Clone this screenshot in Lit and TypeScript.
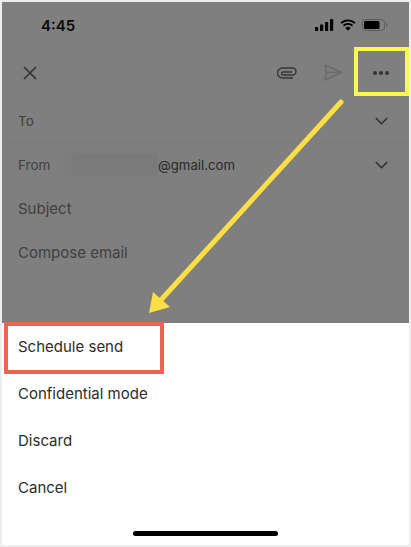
import { LitElement, css, html, svg } from 'lit'
import { customElement } from 'lit/decorators.js'

const chevron = svg`<svg class="chev" width="13" height="8" viewBox="0 0 13 8"><path d="M.8 1l5.700 5.700L12.200 1" fill="none" stroke="#2f2f2f" stroke-width="1.600"/></svg>`

@customElement('app-root')
export class AppRoot extends LitElement {
  render() {
    return html`
      <div class="frame">
        <div class="compose">
          <div class="status">
            <span class="time">4:45</span>
            <div class="status-icons">
              <svg width="19" height="12" viewBox="0 0 19 12">
                <rect x="0" y="8" width="3.200" height="4" rx=".8" />
                <rect x="5" y="5.500" width="3.200" height="6.500" rx=".8" />
                <rect x="10" y="3" width="3.200" height="9" rx=".8" />
                <rect x="15" y="0" width="3.200" height="12" rx=".8" />
              </svg>
              <svg width="16" height="12" viewBox="0 0 16 12">
                <path d="M1 4.200a10 10 0 0 1 14 0M3.400 6.700a6.600 6.600 0 0 1 9.200 0" fill="none" stroke="#000" stroke-width="1.700" />
                <path d="M5.300 9a3.800 3.800 0 0 1 5.400 0L8 11.800z" />
              </svg>
              <svg width="26" height="12" viewBox="0 0 26 12">
                <rect x=".5" y=".5" width="22" height="11" rx="3" fill="none" stroke="#5c5c5c" />
                <rect x="2" y="2" width="15.500" height="8" rx="1.600" />
                <rect x="24" y="4" width="1.400" height="4" rx=".7" fill="#5c5c5c" />
              </svg>
            </div>
          </div>
          <div class="toolbar">
            <svg class="close" width="14" height="14" viewBox="0 0 14 14">
              <path d="M1 1l12 12M13 1L1 13" stroke="#333" stroke-width="1.700" fill="none" />
            </svg>
            <div class="actions">
              <svg class="clip" width="20" height="12" viewBox="0 0 20 12">
                <path d="M16 11H5.500a5 5 0 0 1 0-10h10a3.500 3.500 0 0 1 0 7H6a1.500 1.500 0 0 1 0-3h9" fill="none" stroke="#363636" stroke-width="1.400" />
              </svg>
              <svg class="send" width="19" height="17" viewBox="0 0 19 17">
                <path d="M1 1l16.500 7.500L1 16l1.500-7.500zM2.500 8.500h15" fill="none" stroke="#6b6b6b" stroke-width="1.500" />
              </svg>
              <div class="dots"><i></i><i></i><i></i></div>
            </div>
          </div>
          <div class="row"><span>To</span>${chevron}</div>
          <div class="row">
            <span class="from">From</span>
            <span class="blur"></span>
            <span class="email">@gmail.com</span>
            ${chevron}
          </div>
          <div class="row"><span class="large">Subject</span></div>
          <div class="row plain"><span class="large">Compose email</span></div>
        </div>
        <div class="sheet">
          <div class="item">Schedule send</div>
          <div class="item">Confidential mode</div>
          <div class="item">Discard</div>
          <div class="item">Cancel</div>
          <div class="home"><i></i></div>
        </div>
        <svg class="notes" width="411" height="547" viewBox="0 0 411 547">
          <rect x="356" y="49" width="51" height="45" fill="none" stroke="#fdf752" stroke-width="4" />
          <path d="M341 102L160 301" stroke="#fbdf45" stroke-width="5" stroke-linecap="round" fill="none" />
          <path d="M149 313L153 292 170 307z" fill="#fbdf45" />
          <rect x="6" y="324" width="156" height="48" fill="none" stroke="#ee6352" stroke-width="4" />
        </svg>
      </div>
    `
  }

  static styles = css`
    :host {
      display: block;
      width: 411px;
      height: 547px;
      font-family: Inter, "Liberation Sans", sans-serif;
    }
    .frame {
      position: relative;
      box-sizing: border-box;
      width: 411px;
      height: 547px;
      border: 2px solid #eeeeee;
      background: #fff;
      display: flex;
      flex-direction: column;
    }
    .compose {
      height: 321px;
      flex: none;
      background: #7f7f7f;
      color: #404040;
    }
    .status {
      height: 46px;
      display: flex;
      align-items: center;
      justify-content: space-between;
      padding: 0 21px 0 39px;
    }
    .time {
      font-size: 15px;
      font-weight: 600;
      color: #0a0a0a;
    }
    .status-icons {
      display: flex;
      align-items: center;
      gap: 6px;
    }
    .toolbar {
      height: 52px;
      display: flex;
      align-items: center;
      justify-content: space-between;
      padding: 0 20px 2px 21px;
      border-bottom: 1px solid #7b7b7b;
      box-sizing: border-box;
    }
    .actions {
      display: flex;
      align-items: center;
    }
    .clip {
      margin-right: 27px;
    }
    .send {
      margin-right: 30px;
    }
    .dots {
      display: flex;
      gap: 2px;
    }
    .dots i {
      width: 4px;
      height: 4px;
      border-radius: 50%;
      background: #333;
    }
    .row {
      height: 43.5px;
      box-sizing: border-box;
      display: flex;
      align-items: center;
      padding: 0 21px 0 16px;
      font-size: 13.5px;
      border-bottom: 1px solid #7b7b7b;
    }
    .row.plain {
      border-bottom: none;
    }
    .row .chev {
      margin-left: auto;
    }
    .from {
      width: 42px;
    }
    .blur {
      width: 98px;
      height: 23px;
      background: linear-gradient(90deg, #7f7f7f, #7a7a7a 20%, #7a7a7a);
    }
    .email {
      color: #2a2a2a;
      font-size: 13.200px;
    }
    .large {
      font-size: 15px;
    }
    .sheet {
      flex: 1;
      display: flex;
      flex-direction: column;
    }
    .item {
      height: 47px;
      flex: none;
      display: flex;
      align-items: center;
      padding-left: 16px;
      font-size: 15px;
      color: #2c2c2c;
    }
    .home {
      flex: 1;
      display: flex;
      justify-content: center;
      align-items: flex-end;
      padding-bottom: 9px;
    }
    .home i {
      width: 145px;
      height: 5px;
      border-radius: 3px;
      background: #000;
    }
    .notes {
      position: absolute;
      left: -2px;
      top: -2px;
      pointer-events: none;
    }
  `
}
